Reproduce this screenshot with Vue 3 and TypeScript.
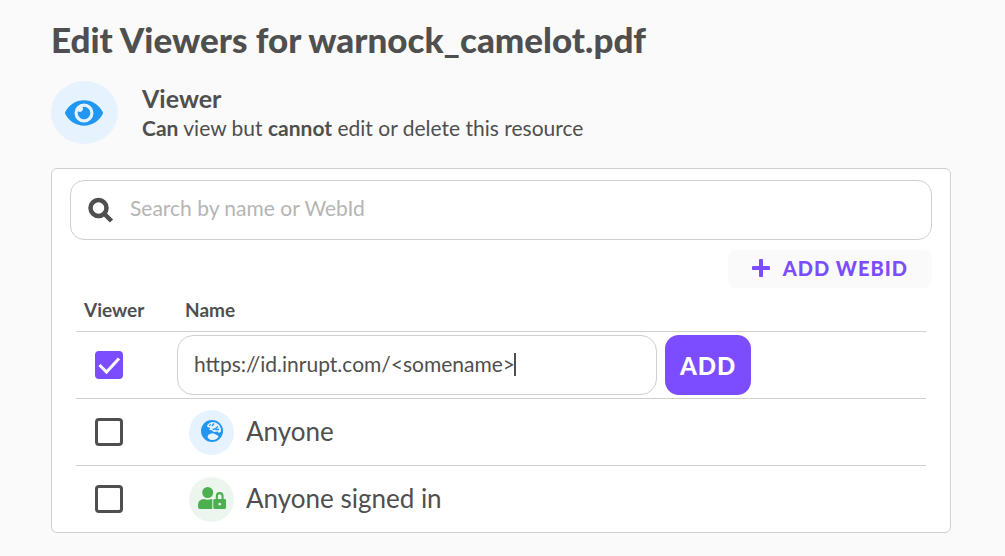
<script setup lang="ts">
import { nextTick, onMounted, ref, watch } from 'vue'

interface Agent {
  id: string
  name: string
  icon: 'globe' | 'signed-in'
  selected: boolean
}

const search = ref('')
const webId = ref('https://id.inrupt.com/<somename>')
const webIdSelected = ref(true)
const webIdInput = ref<HTMLInputElement | null>(null)
const caretOffset = ref(0)

const agents = ref<Agent[]>([
  { id: 'anyone', name: 'Anyone', icon: 'globe', selected: false },
  { id: 'signed-in', name: 'Anyone signed in', icon: 'signed-in', selected: false },
])

// Places the caret after the last character of the WebID.
function placeCaret(): void {
  const input = webIdInput.value
  const context = document.createElement('canvas').getContext('2d')
  if (!input || !context) return
  const style = getComputedStyle(input)
  context.font = `${style.fontWeight} ${style.fontSize} ${style.fontFamily}`
  caretOffset.value = Math.round(
    context.measureText(webId.value).width + parseFloat(style.paddingLeft),
  )
}

onMounted(async () => {
  await nextTick()
  placeCaret()
})
watch(webId, placeCaret)
</script>

<template>
  <main class="page">
    <h1 class="title">Edit Viewers for warnock_camelot.pdf</h1>

    <header class="role">
      <span class="role-icon">
        <svg viewBox="0 0 576 512" aria-hidden="true">
          <path d="M572.52 241.4C518.29 135.59 410.93 64 288 64S57.68 135.64 3.48 241.41a32.35 32.35 0 0 0 0 29.19C57.71 376.41 165.07 448 288 448s230.32-71.64 284.52-177.41a32.35 32.35 0 0 0 0-29.19zM288 400a144 144 0 1 1 144-144 143.93 143.93 0 0 1-144 144zm0-240a95.31 95.31 0 0 0-25.31 3.79 47.85 47.85 0 0 1-66.9 66.9A95.78 95.78 0 1 0 288 160z" />
        </svg>
      </span>
      <div>
        <h2 class="role-name">Viewer</h2>
        <p class="role-text"><strong>Can</strong> view but <strong>cannot</strong> edit or delete this resource</p>
      </div>
    </header>

    <section class="card">
      <label class="search">
        <svg class="search-icon" viewBox="0 0 26 26" aria-hidden="true">
          <circle cx="10.5" cy="11" r="8" />
          <path d="M16.5 17l7 7" />
        </svg>
        <input v-model="search" type="search" placeholder="Search by name or WebId" aria-label="Search by name or WebId" />
      </label>

      <button class="add-webid" type="button">
        <svg viewBox="0 0 18 18" aria-hidden="true"><path d="M9 1.5v15M1.5 9h15" /></svg>
        ADD WEBID
      </button>

      <table class="agents">
        <thead>
          <tr>
            <th class="check-col" scope="col">Viewer</th>
            <th scope="col">Name</th>
          </tr>
        </thead>
        <tbody>
          <tr>
            <td>
              <span class="check">
                <input v-model="webIdSelected" type="checkbox" aria-label="Viewer access for new WebID" />
                <svg v-if="webIdSelected" viewBox="0 0 28 28" aria-hidden="true"><path d="M4.5 14l7 7L24 7.5" /></svg>
              </span>
            </td>
            <td>
              <form class="webid-form" @submit.prevent>
                <span class="webid-field">
                  <input ref="webIdInput" v-model="webId" type="text" aria-label="WebID" />
                  <span class="caret" :style="{ left: caretOffset + 'px' }"></span>
                </span>
                <button class="add" type="submit">ADD</button>
              </form>
            </td>
          </tr>
          <tr v-for="agent in agents" :key="agent.id">
            <td>
              <span class="check">
                <input :id="agent.id" v-model="agent.selected" type="checkbox" />
                <svg v-if="agent.selected" viewBox="0 0 28 28" aria-hidden="true"><path d="M4.5 14l7 7L24 7.5" /></svg>
              </span>
            </td>
            <td>
              <label class="agent" :for="agent.id">
                <span class="avatar" :class="agent.icon">
                  <svg v-if="agent.icon === 'globe'" class="globe" viewBox="0 0 22 22" aria-hidden="true">
                    <circle cx="11" cy="11" r="11" fill="#2196f3" />
                    <path d="M6 5.500Q8.500 2 12 2Q17 2.500 19 6.500Q20.300 9 20 11.500L18 13L16.500 11.500L13 12L11 10.500L8 9.500L9.500 8L6.500 7z" fill="#e6f3fe" />
                    <path d="M6.500 17Q6.500 14.500 9 14Q11.500 12.500 14 14L17.500 16Q17.500 17.500 16 18.500Q13.500 20.500 10 20Q7.500 19.500 6.500 17z" fill="#e6f3fe" />
                    <path d="M8 5.500L10 4.500M11 6L13 3.500M11.500 9.700L14 9L17 6.500M14.500 9.500L18 9.500" stroke="#2196f3" stroke-width="1.3" fill="none" />
                  </svg>
                  <svg v-else class="user-lock" viewBox="0 0 28 22" aria-hidden="true">
                    <circle cx="9.700" cy="5.500" r="5.500" />
                    <path d="M6 12Q9.700 13.500 13.500 12L14.300 12.200V22H2Q0 22 0 20V18Q0 12.500 6 12z" />
                    <path fill-rule="evenodd" d="M17.800 12V9a3.900 3.900 0 0 1 7.800 0v3h1q1.400 0 1.400 1.400v7.200q0 1.400-1.400 1.400h-9.900q-1.400 0-1.400-1.400v-7.200q0-1.400 1.400-1.400zM19.900 12h3.600V9a1.800 1.800 0 0 0-3.600 0zM21.700 15.700a1.400 1.400 0 1 0 .01 0z" />
                  </svg>
                </span>
                <span class="agent-name">{{ agent.name }}</span>
              </label>
            </td>
          </tr>
        </tbody>
      </table>
    </section>
  </main>
</template>

<style>
body {
  margin: 0;
  background: #fafafa;
}
</style>

<style scoped>
* {
  box-sizing: border-box;
}

.page {
  padding: 19px 54px 23px 51px;
  color: #4f4f4f;
  font-family: Lato, "Open Sans", sans-serif;
}

button,
input {
  font-family: inherit;
}

.title {
  margin: 0;
  font-size: 35px;
  line-height: 40px;
  font-weight: 900;
}

.role {
  display: flex;
  align-items: center;
  gap: 24px;
  margin: 22px 0 24px;
}

.role-icon {
  display: grid;
  place-items: center;
  width: 67px;
  height: 63px;
  padding-right: 1px;
  border-radius: 50%;
  background: #e6f3fe;
}

.role-icon svg {
  width: 38px;
  height: 34px;
  fill: #2196f3;
}

.role-name {
  margin: 0;
  font-size: 25px;
  line-height: 32px;
  font-weight: 700;
}

.role-text {
  margin: 0;
  padding-bottom: 2px;
  font-size: 21px;
  line-height: 28px;
}

.card {
  padding: 11px 18px 0;
  border: 1px solid #d0d0d0;
  border-radius: 6px;
  background: #fff;
}

.search {
  display: flex;
  align-items: center;
  gap: 16px;
  height: 60px;
  padding: 0 17px;
  border: 1px solid #d0d0d0;
  border-radius: 14px;
}

.search-icon {
  width: 26px;
  height: 26px;
  fill: none;
  stroke: #4f4f4f;
  stroke-width: 4.5;
}

.search input {
  flex: 1;
  min-width: 0;
  padding: 0 0 6px;
  border: 0;
  outline: 0;
  background: none;
  color: inherit;
  font-size: 21px;
}

.search input::placeholder {
  color: #b5b5b5;
}

.add-webid {
  display: flex;
  align-items: center;
  gap: 13px;
  height: 38px;
  margin: 10px 0 0 auto;
  padding: 0 24px 2px;
  border: 0;
  border-radius: 8px;
  background: #fafafa;
  color: #7c4dff;
  font-size: 20px;
  font-weight: 900;
  letter-spacing: 1px;
}

.add-webid svg {
  width: 18px;
  height: 18px;
  fill: none;
  stroke: currentColor;
  stroke-width: 4;
  stroke-linecap: round;
}

.agents {
  width: calc(100% - 12px);
  margin: 0 6px;
  border-collapse: separate;
  border-spacing: 0;
}

.agents th {
  height: 44px;
  padding: 0 8px;
  border-bottom: 1px solid #d0d0d0;
  font-size: 19px;
  font-weight: 700;
  text-align: left;
}

.agents .check-col {
  width: 101px;
}

.agents td {
  height: 67px;
  padding: 0;
  border-bottom: 1px solid #d0d0d0;
}

.agents tbody tr:last-child td {
  height: 66px;
  border-bottom: 0;
}

.check {
  position: relative;
  display: block;
  width: 28px;
  height: 28px;
  margin-left: 19px;
}

.check input {
  display: block;
  width: 28px;
  height: 28px;
  margin: 0;
  appearance: none;
  border: 3px solid #4f4f4f;
  border-radius: 4px;
}

.check input:checked {
  border-color: #7c4dff;
  background: #7c4dff;
}

.check svg {
  position: absolute;
  inset: 0;
  fill: none;
  stroke: #fff;
  stroke-width: 3;
  pointer-events: none;
}

.webid-form {
  display: flex;
  gap: 8px;
}

.webid-field {
  position: relative;
  flex: 0 1 480px;
}

.webid-field input {
  width: 100%;
  height: 60px;
  padding: 0 16px 4px;
  border: 1px solid #d0d0d0;
  border-radius: 16px;
  outline: 0;
  background: #fff;
  color: inherit;
  font-size: 21px;
}

.caret {
  position: absolute;
  top: 18px;
  width: 2px;
  height: 23px;
  background: #4f4f4f;
}

.add {
  height: 60px;
  padding: 0 15px;
  border: 0;
  border-radius: 14px;
  background: #7c4dff;
  color: #fff;
  font-size: 24px;
  font-weight: 900;
  letter-spacing: 1px;
}

.agent {
  display: flex;
  align-items: center;
  gap: 12px;
  padding-left: 12px;
  font-size: 26px;
}

.agent-name {
  padding-bottom: 2px;
}

.avatar {
  display: grid;
  place-items: center;
  width: 45px;
  height: 45px;
  padding-bottom: 2px;
  border-radius: 50%;
}

.avatar.globe {
  background: #e6f3fe;
}

.avatar.signed-in {
  background: #edf6ee;
}

svg.globe {
  width: 22px;
  height: 22px;
}

.user-lock {
  width: 28px;
  height: 22px;
  fill: #4caf50;
}
</style>
